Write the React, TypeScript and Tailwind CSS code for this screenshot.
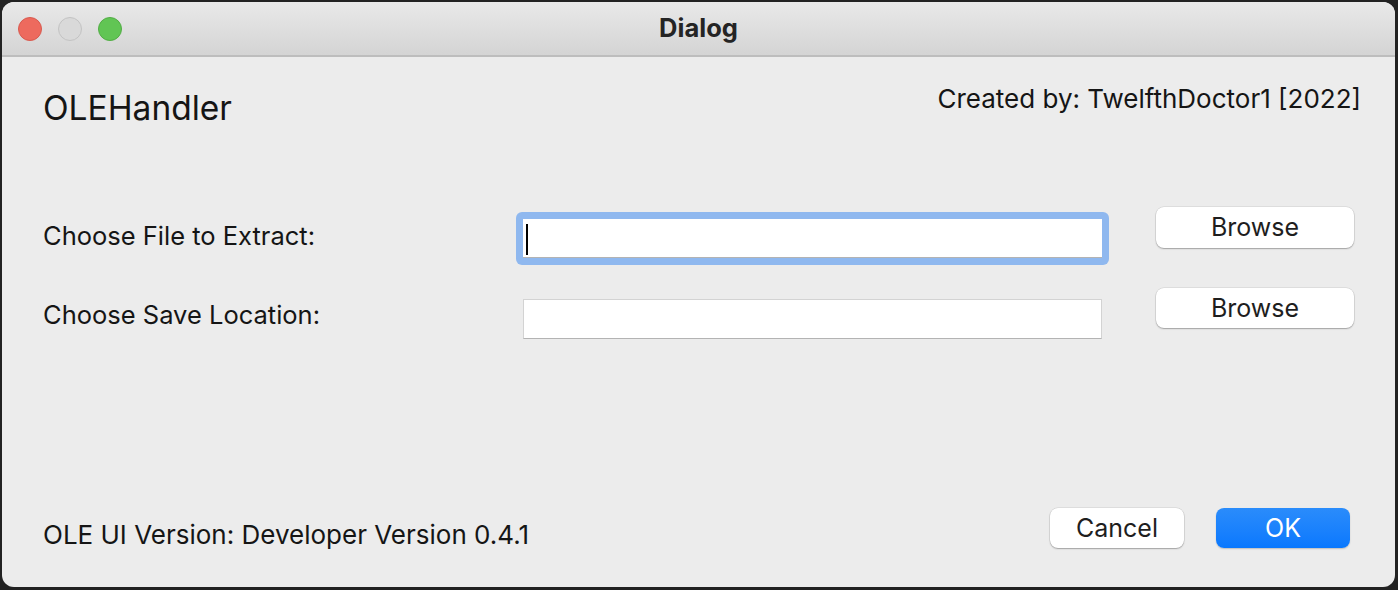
import React from "react";

function TrafficLights() {
  return (
    <div className="flex items-center gap-[16px] pl-[16px]">
      <span className="w-[24px] h-[24px] rounded-full bg-[#ed6a5e] border border-[#d85a4f]" />
      <span className="w-[24px] h-[24px] rounded-full bg-[#d9d9d9] border border-[#c3c3c3]" />
      <span className="w-[24px] h-[24px] rounded-full bg-[#61c554] border border-[#52ad45]" />
    </div>
  );
}

function PushButton({ label, className = "" }: { label: string; className?: string }) {
  return (
    <button
      className={`bg-white rounded-[8px] text-[25px] leading-none text-[#1e1e1e] shadow-[0_1px_1.5px_rgba(0,0,0,0.28),0_0_0_0.5px_rgba(0,0,0,0.12)] flex items-center justify-center ${className}`}
    >
      {label}
    </button>
  );
}

export default function App() {
  return (
    <div className="w-[1398px] h-[590px] bg-[#222222] pt-[2px] pl-[2px] pr-[3px] pb-[3px] font-[family-name:Inter,'Liberation_Sans',sans-serif]">
      <div className="h-full flex flex-col rounded-[12px] overflow-hidden bg-[#ececec] text-[#151515]">
        {/* title bar */}
        <div className="h-[55px] grid grid-cols-[1fr_auto_1fr] items-center bg-linear-to-b from-[#e9e9e9] to-[#d4d4d4] border-b-2 border-[#bdbdbd]">
          <TrafficLights />
          <div className="text-[25.5px] font-bold text-[#242424]">Dialog</div>
          <div />
        </div>

        <div className="flex-1 flex flex-col pl-[41px] pr-[41px] pt-[26px] pb-[39px]">
          {/* header */}
          <div className="h-[124px] flex justify-between items-start">
            <div className="text-[33.5px] leading-[40px] mt-[5px]">OLEHandler</div>
            <div className="text-[26px] leading-[32px] -mr-[7px]">Created by: TwelfthDoctor1 [2022]</div>
          </div>

          {/* file row */}
          <div className="h-[81px] flex items-start">
            <div className="w-[480px] text-[25.5px] leading-[32px] mt-[13px]">Choose File to Extract:</div>
            <div className="mt-[5px] -mx-[7px] p-[7px] bg-[#8fb8ef] rounded-[6px]">
              <div className="w-[579px] h-[39px] bg-white border-b border-[#b3b3b3] pl-[3px] pt-[5px]">
                <div className="w-[2px] h-[31px] bg-black" />
              </div>
            </div>
            <PushButton label="Browse" className="ml-[54px] w-[198px] h-[41px]" />
          </div>

          {/* save row */}
          <div className="flex items-start">
            <div className="w-[480px] text-[25.5px] leading-[32px] mt-[11px]">Choose Save Location:</div>
            <div className="mt-[11px] w-[579px] h-[40px] bg-white border border-[#d3d3d3] border-b-[#b3b3b3]" />
            <PushButton label="Browse" className="ml-[54px] w-[198px] h-[40px]" />
          </div>

          <div className="flex-1" />

          {/* bottom row */}
          <div className="h-[40px] flex items-start">
            <div className="text-[26px] leading-[32px] mt-[11px]">OLE UI Version: Developer Version 0.4.1</div>
            <PushButton label="Cancel" className="ml-auto w-[134px] h-[40px]" />
            <button className="ml-[32px] mr-[4px] w-[134px] h-[40px] rounded-[8px] bg-linear-to-b from-[#2a8cfb] to-[#0878fe] text-white text-[25px] leading-none shadow-[0_1px_1.5px_rgba(0,0,0,0.2)] flex items-center justify-center">
              OK
            </button>
          </div>
        </div>
      </div>
    </div>
  );
}
